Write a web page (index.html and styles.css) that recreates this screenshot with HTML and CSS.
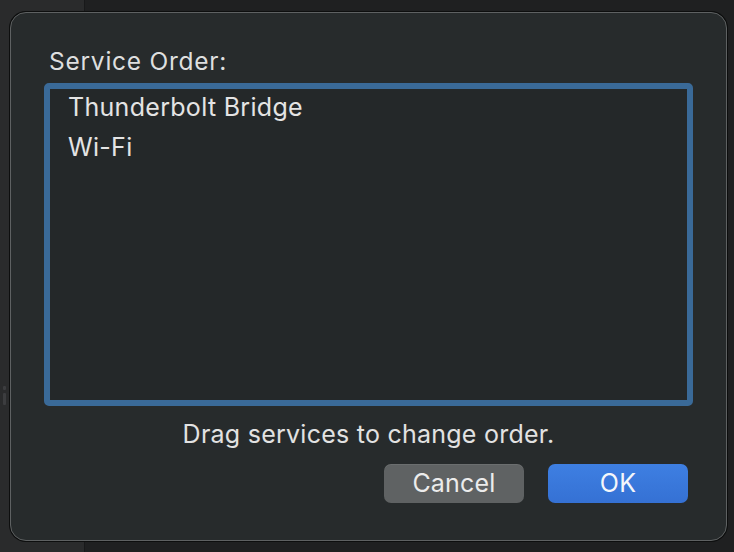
FILE: index.html
```html
<!DOCTYPE html>
<html>
<head>
<meta charset="utf-8">
<link rel="stylesheet" href="styles.css">
</head>
<body>
<div class="backdrop">
  <div class="side"><span class="grip-dot"></span><span class="grip-bar"></span></div>
  <div class="divider"></div>
  <div class="main"></div>
</div>
<div class="dialog">
  <div class="label">Service Order:</div>
  <div class="list">
    <div class="item">Thunderbolt Bridge</div>
    <div class="item">Wi-Fi</div>
  </div>
  <div class="hint">Drag services to change order.</div>
  <div class="buttons">
    <button class="btn cancel">Cancel</button>
    <button class="btn ok">OK</button>
  </div>
</div>
</body>
</html>
```
FILE: styles.css
```css
html, body {
  margin: 0;
  padding: 0;
  width: 734px;
  height: 552px;
  overflow: hidden;
  background: #1f2021;
  font-family: "Inter", "Noto Sans", sans-serif;
}
.backdrop {
  display: grid;
  grid-template-columns: 84px 1px 1fr;
  height: 552px;
}
.side {
  background: #2a2b2c;
  display: flex;
  flex-direction: column;
  align-items: flex-start;
  gap: 3px;
  padding: 386px 0 0 3px;
  box-sizing: border-box;
}
.grip-dot {
  width: 3px;
  height: 4px;
  border-radius: 1px;
  background: #3c3d3f;
}
.grip-bar {
  width: 3px;
  height: 12px;
  border-radius: 1px;
  background: #3c3d3f;
}
.divider { background: #18191a; }
.main { background: #1f2021; }

.dialog {
  position: absolute;
  left: 10px;
  top: 12px;
  width: 649px;
  height: 527px;
  border: 1px solid #5e6162;
  border-radius: 16px;
  box-shadow: 0 0 0 1px #0d0e0e;
  background: #272b2c;
  display: flex;
  flex-direction: column;
  padding: 0 33px;
  box-sizing: content-box;
}
.label {
  color: #dedfdf;
  font-size: 24.5px;
  letter-spacing: 0.75px;
  padding: 33px 0 0 5px;
  height: 30px;
  line-height: 30px;
  margin-bottom: 7px;
  flex: none;
}
.list {
  height: 311px;
  border: 6px solid #3a6a98;
  border-radius: 5px;
  background: #242829;
  padding: 0 0 0 18px;
  box-sizing: content-box;
  flex: none;
}
.item {
  color: #e4e4e4;
  font-size: 25px;
  letter-spacing: 0.3px;
  line-height: 36px;
  height: 40px;
}
.hint {
  color: #e2e2e2;
  font-size: 25px;
  letter-spacing: 0.25px;
  text-align: center;
  margin-top: 13px;
  line-height: 30px;
  height: 30px;
  flex: none;
}
.buttons {
  display: flex;
  justify-content: flex-end;
  gap: 24px;
  margin-top: 15px;
  padding-right: 5px;
  flex: none;
}
.btn {
  width: 140px;
  height: 39px;
  border: none;
  border-radius: 7px;
  font-family: "Inter", "Noto Sans", sans-serif;
  font-size: 25px;
  letter-spacing: 0.2px;
  color: #ececec;
  padding: 0;
  line-height: 39px;
}
.cancel {
  background: #5f6263;
  box-shadow: inset 0 1px 0 rgba(255,255,255,0.08);
}
.ok {
  background: linear-gradient(#3e7fe2, #3571d4);
  color: #f4f6fa;
}
```
